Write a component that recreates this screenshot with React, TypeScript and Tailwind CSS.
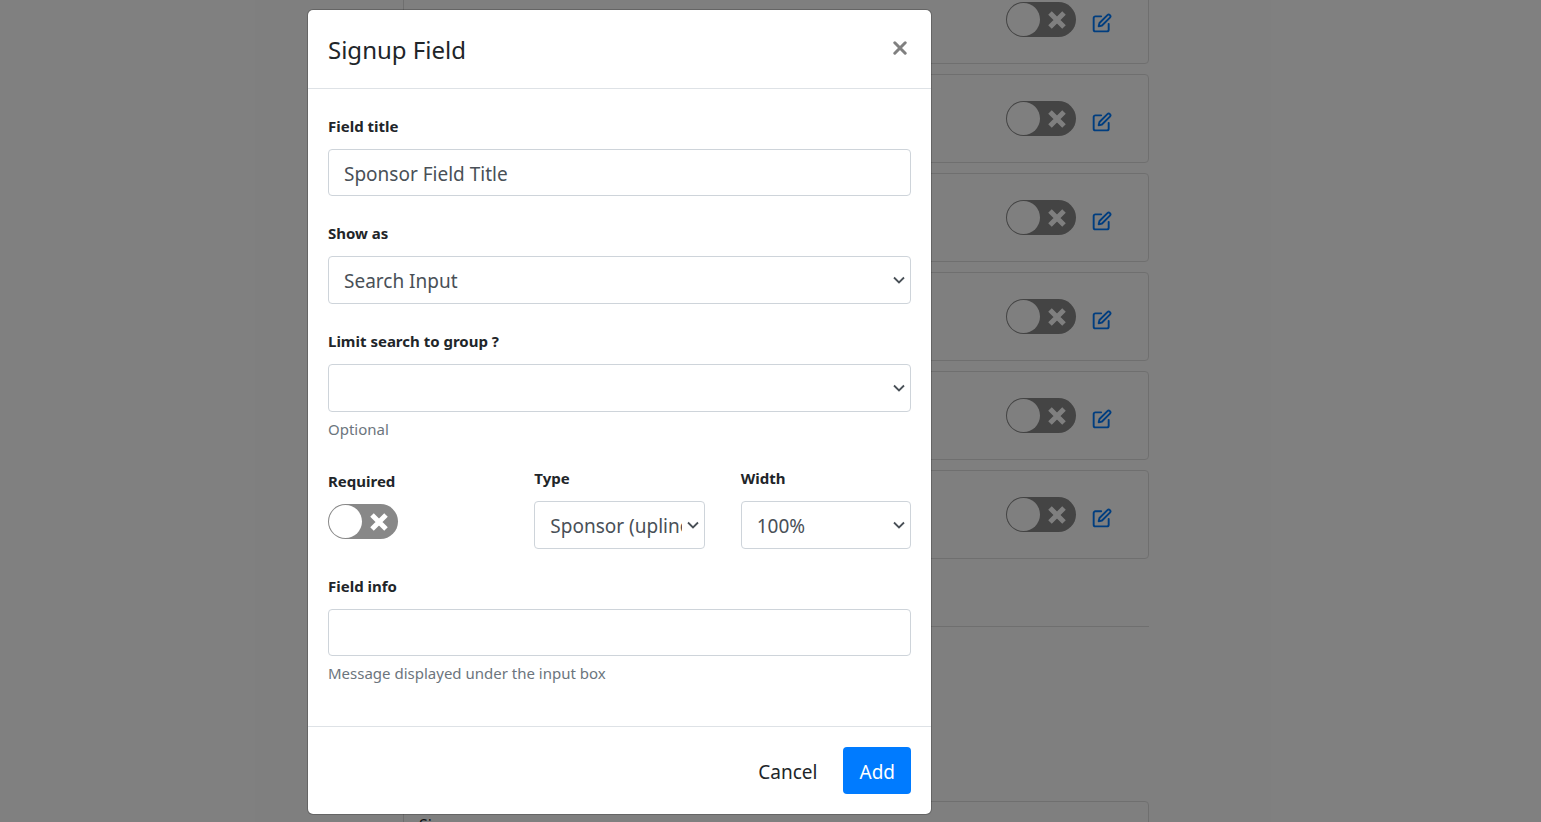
import React, { useState } from "react";
import { FiEdit } from "react-icons/fi";

const fieldBox =
  "w-full rounded border border-[#ced4da] bg-white pt-0.5 pl-[15px] text-[19px] leading-7 text-[#495057] outline-none focus:border-[#80bdff]";

function Toggle({ id, label }: { id?: string; label?: string }) {
  const [on, setOn] = useState(false);
  return (
    <span className="relative block h-[35px] w-[70px] shrink-0">
      <input
        id={id}
        type="checkbox"
        aria-label={label}
        checked={on}
        onChange={() => setOn(!on)}
        className="peer absolute inset-0 z-10 size-full cursor-pointer opacity-0"
      />
      <span className="flex h-full items-center rounded-full bg-[#888888] p-px peer-checked:flex-row-reverse peer-checked:bg-[#007bff]">
        <span className="size-[33px] rounded-full bg-white" />
        <span className="flex flex-1 justify-center pr-0.5">
          <svg viewBox="0 0 18 18" className="size-[18px]" fill="none" stroke="#fff" strokeWidth="5" aria-hidden="true">
            <path d="M2 2 16 16M16 2 2 16" />
          </svg>
        </span>
      </span>
    </span>
  );
}

function Select({ id, value, options }: { id: string; value: string; options: string[] }) {
  return (
    <div className="relative">
      <select id={id} defaultValue={value} className={`${fieldBox} block h-12 appearance-none pr-[22px]`}>
        {options.map((o) => (
          <option key={o} value={o}>
            {o}
          </option>
        ))}
      </select>
      <svg
        viewBox="0 0 12 8"
        className="pointer-events-none absolute top-5 right-1.5 h-2 w-3"
        fill="none"
        stroke="#495057"
        strokeWidth="1.8"
        aria-hidden="true"
      >
        <path d="M1 1.5 6 6.5 11 1.5" />
      </svg>
    </div>
  );
}

function Label({ htmlFor, children }: { htmlFor: string; children: React.ReactNode }) {
  return (
    <label htmlFor={htmlFor} className="mb-[11px] block text-[15px] leading-6 font-bold">
      {children}
    </label>
  );
}

function Hint({ children }: { children: React.ReactNode }) {
  return <p className="mt-[5px] text-[15px] leading-6 text-[#6c757d]">{children}</p>;
}

function FieldList() {
  return (
    <main className="grid grid-cols-[403fr_746fr_392fr]">
      <div className="col-start-2 -mt-[25px]">
        <div className="flex flex-col gap-2.5">
          {[1, 2, 3, 4, 5, 6].map((n) => (
            <div key={n} className="flex h-[89px] items-center justify-end gap-4 rounded border border-[#dfdfdf] pr-9">
              <Toggle label={`Enable field ${n}`} />
              <button type="button" aria-label={`Edit field ${n}`} className="pt-1.5 text-[#007bff]">
                <FiEdit size={20} strokeWidth={2.3} />
              </button>
            </div>
          ))}
        </div>
        <hr className="mt-[67px] border-[#dfdfdf]" />
        <div className="mt-[174px] rounded border border-[#dfdfdf] px-[15px] pt-[11px] text-[16px] leading-6">Sign</div>
      </div>
    </main>
  );
}

export default function App() {
  return (
    <div className="relative h-screen overflow-hidden bg-white font-['Noto_Sans','Open_Sans',sans-serif] text-[#212529]">
      <FieldList />
      <div className="absolute inset-0 grid grid-cols-[307fr_625fr_609fr] items-start overflow-hidden bg-black/50">
        <form
          role="dialog"
          aria-modal="true"
          aria-labelledby="dialog-title"
          onSubmit={(e) => e.preventDefault()}
          className="col-start-2 mt-[9px] rounded-md border border-black/20 bg-white bg-clip-padding"
        >
          <header className="flex items-start justify-between border-b border-[#dee2e6] px-5 pt-[21px] pb-[19px]">
            <h1 id="dialog-title" className="text-2xl leading-[38px]">
              Signup Field
            </h1>
            <button type="button" aria-label="Close" className="pt-2.5 pr-1 text-[#808080]">
              <svg viewBox="0 0 14 14" className="size-3.5" fill="none" stroke="currentColor" strokeWidth="3" strokeLinecap="round">
                <path d="M1.8 1.8 12.2 12.2M12.2 1.8 1.8 12.2" />
              </svg>
            </button>
          </header>

          <div className="flex flex-col gap-[25px] px-5 pt-[25px] pb-[41px]">
            <div>
              <Label htmlFor="field-title">Field title</Label>
              <input id="field-title" type="text" defaultValue="Sponsor Field Title" className={`${fieldBox} block h-[47px] pr-[15px]`} />
            </div>

            <div>
              <Label htmlFor="show-as">Show as</Label>
              <Select id="show-as" value="Search Input" options={["Search Input", "Dropdown"]} />
            </div>

            <div>
              <Label htmlFor="group">Limit search to group ?</Label>
              <Select id="group" value="" options={[""]} />
              <Hint>Optional</Hint>
            </div>

            <div className="grid grid-cols-3 gap-9">
              <div className="pt-[3px]">
                <Label htmlFor="required">Required</Label>
                <Toggle id="required" />
              </div>
              <div>
                <Label htmlFor="type">Type</Label>
                <Select id="type" value="Sponsor (upline)" options={["Sponsor (upline)"]} />
              </div>
              <div>
                <Label htmlFor="width">Width</Label>
                <Select id="width" value="100%" options={["100%", "50%"]} />
              </div>
            </div>

            <div>
              <Label htmlFor="info">Field info</Label>
              <input id="info" type="text" className={`${fieldBox} block h-[47px] pr-[15px]`} />
              <Hint>Message displayed under the input box</Hint>
            </div>
          </div>

          <footer className="flex justify-end gap-2.5 border-t border-[#dee2e6] p-5 text-[19px] leading-7">
            <button type="button" className="h-[47px] px-4 pt-0.5">
              Cancel
            </button>
            <button type="submit" className="h-[47px] rounded bg-[#007bff] px-4 pt-0.5 text-white">
              Add
            </button>
          </footer>
        </form>
      </div>
    </div>
  );
}
